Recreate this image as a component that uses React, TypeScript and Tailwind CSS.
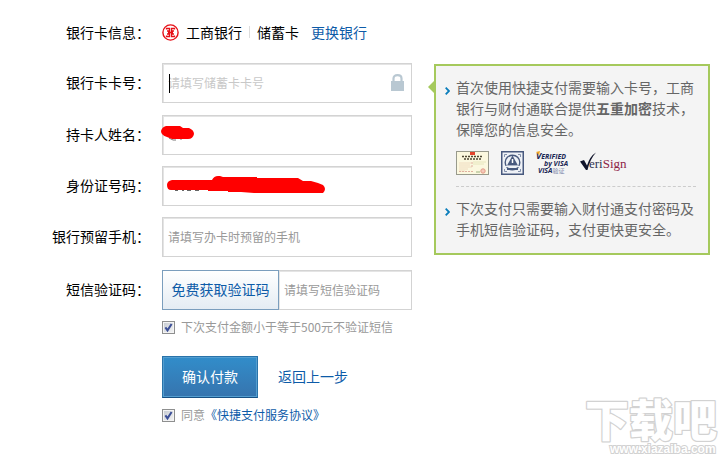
import { useState } from "react";
import type { InputHTMLAttributes, ReactNode } from "react";
import clsx from "clsx";

const inputClass =
  "block h-10 w-full border border-[#d3d3d3] bg-white px-[5px] pb-[2px] text-xs text-[#333] shadow-[inset_1px_1px_0_#e4e4e4] outline-none";

function Field({ id, label, children }: { id: string; label: string; children: ReactNode }) {
  return (
    <div className="flex items-center gap-3">
      <label htmlFor={id} className="w-[150px] shrink-0 pb-[2px] text-right text-black">
        {label}：
      </label>
      <div className="relative min-w-0 flex-1">{children}</div>
    </div>
  );
}

function TickBox({ className, ...props }: InputHTMLAttributes<HTMLInputElement>) {
  return (
    <span className={clsx("relative block size-[13px] shrink-0", className)}>
      <input
        type="checkbox"
        className="peer block size-[13px] appearance-none border border-[#8e8f8f] bg-linear-to-br from-[#c4c9d0] to-[#f6f6f6] shadow-[inset_0_0_0_1px_#f4f4f4]"
        {...props}
      />
      <svg viewBox="0 0 13 13" className="pointer-events-none absolute inset-0 hidden peer-checked:block">
        <path d="M3.4 6.4 5.5 9.4 9.6 3" fill="none" stroke="#3c4f97" strokeWidth="2" />
      </svg>
    </span>
  );
}

function BankLogo() {
  return (
    <svg viewBox="0 0 17 17" className="size-[17px] shrink-0" fill="none" stroke="#e60f16">
      <circle cx="8.5" cy="8.5" r="7.6" strokeWidth="1.4" />
      <path d="M4.5 5.5V4.5H7.5V7H5M12.5 5.5V4.5H9.5V7H12M4.5 11.5V12.5H7.5V10H5M12.5 11.5V12.5H9.5V10H12M6 8.5H11" strokeWidth="1.3" />
    </svg>
  );
}

function LockIcon() {
  return (
    <svg viewBox="0 0 13 17" className="pointer-events-none absolute top-[11px] right-2 h-[17px] w-[13px]">
      <path d="M2.5 8V4.5Q2.5 1.2 6.5 1.2T10.5 4.5V8" fill="none" stroke="#b9c8d2" strokeWidth="2.2" />
      <rect y="7" width="13" height="10" fill="#b9c8d2" />
    </svg>
  );
}

function LicenseBadge() {
  return (
    <svg viewBox="0 0 33 24" className="h-6 w-[33px]">
      <rect x=".5" y=".5" width="32" height="23" fill="#fbf8df" stroke="#989a8c" />
      <path d="M14 1h5v3h-5z" fill="#e2432c" />
      <path d="M6 5.5H27M8 8H25" stroke="#4c4633" strokeWidth="1.5" strokeDasharray="2 1" />
      <path d="M3 12H15M3 14H14M3 16H16M3 18H12M3 20H9" stroke="#f0dcc0" />
      <path d="M17 11H30M17 13H28" stroke="#e6e6bc" />
      <path d="M16 11V16M3 20.5H18" stroke="#e0b0a0" strokeDasharray="2 1" />
      <circle cx="27" cy="20" r="2.2" fill="#f5c8ba" stroke="#e39d88" />
      <path d="M20 21H24" stroke="#9db381" />
    </svg>
  );
}

function PoliceBadge() {
  return (
    <svg viewBox="0 0 23 24" className="h-6 w-[23px]">
      <rect x=".75" y=".75" width="21.5" height="22.5" fill="#eef1f6" stroke="#48597e" strokeWidth="1.5" />
      <path d="M3.5 6V3.5H6M17 3.5H19.5V6M19.5 18V20.5H17M6 20.5H3.5V18" fill="none" stroke="#8390ab" />
      <circle cx="11.5" cy="11.5" r="7.3" fill="#eef1f6" stroke="#48597e" strokeWidth="1.4" />
      <path d="M11.5 4.5 14.5 10 17 14.5H6L8.5 10Z" fill="#48597e" />
      <path d="M11.5 8V12" stroke="#fff" strokeWidth="1.5" />
      <path d="M4 15.5H19" stroke="#eef1f6" strokeWidth="1.4" />
      <path d="M6 18H17" stroke="#48597e" strokeWidth="2" />
    </svg>
  );
}

function VisaBadge() {
  return (
    <svg viewBox="0 0 32 24" className="h-6 w-8 overflow-visible font-['Open_Sans',sans-serif] font-bold italic" fill="#1b2754">
      <text x="0" y="8" fontSize="7">
        <tspan fontSize="9">V</tspan>ERIFIED
      </text>
      <path d="M0 1 4 0 3 4Z" fill="#f1a51f" />
      <text x="8" y="15" fontSize="7">by VISA</text>
      <text x="2" y="22" fontSize="7">
        VISA
        <tspan fontSize="6" fontWeight="400" fontStyle="normal" fontFamily="Noto Sans CJK SC, sans-serif" fill="#7e89aa">验证</tspan>
      </text>
    </svg>
  );
}

function VeriSignBadge() {
  return (
    <svg viewBox="0 0 48 24" className="h-6 w-12 overflow-visible font-['Liberation_Serif',serif]" fontSize="13">
      <path d="M0 10.5 4 9 7 14.5Q10 5 16 1.5 10 8 7.5 19H6Z" fill="#10142b" />
      <text x="9" y="17" fill="#303452">
        eri<tspan fill="#8d2346">Sign</tspan>
      </text>
    </svg>
  );
}

function Chevron() {
  return (
    <svg viewBox="0 0 5 8" className="mt-[10px] h-2 w-[5px] shrink-0" fill="none" stroke="#0a7dbb" strokeWidth="1.8">
      <path d="M.7.7 4 4 .7 7.3" />
    </svg>
  );
}

function Tips() {
  return (
    <aside className="relative mt-16 max-w-[276px] min-w-0 flex-1 self-start border-2 border-[#a5c95c] bg-[#f4f4f4] pt-[11px] pr-3 pb-[13px] pl-[9px] leading-[21px] text-[#666]">
      <svg viewBox="0 0 6 12" className="absolute top-[15px] -left-2 h-3 w-[6px]" fill="#a5c95c">
        <path d="M6 0V12L0 6Z" />
      </svg>
      <div className="flex gap-[6px]">
        <Chevron />
        <div className="min-w-0 flex-1 border-b border-dashed border-[#ccc] pb-[11px]">
          <p>
            首次使用快捷支付需要输入卡号，工商银行与财付通联合提供<b className="font-bold">五重加密</b>技术，保障您的信息安全。
          </p>
          <div className="mt-[11px] flex gap-3">
            <LicenseBadge />
            <PoliceBadge />
            <VisaBadge />
            <VeriSignBadge />
          </div>
        </div>
      </div>
      <div className="mt-[11px] flex gap-[6px]">
        <Chevron />
        <p className="min-w-0 flex-1">下次支付只需要输入财付通支付密码及手机短信验证码，支付更快更安全。</p>
      </div>
    </aside>
  );
}

function Watermark() {
  return (
    <svg
      viewBox="0 0 140 64"
      className="pointer-events-none absolute right-0 bottom-0 h-16 w-[140px] overflow-visible font-['Noto_Sans_CJK_SC',sans-serif] font-black"
      fill="#fff"
      stroke="#d2d2d2"
      paintOrder="stroke"
    >
      <text x="0" y="41" fontSize="44" strokeWidth="2.5" strokeLinejoin="round">下载吧</text>
      <text x="25" y="57" fontSize="12" strokeWidth="2" className="font-['Liberation_Sans',sans-serif] font-bold">www.xiazaiba.com</text>
    </svg>
  );
}

export default function App() {
  const [skipSms, setSkipSms] = useState(true);
  const [agreed, setAgreed] = useState(true);

  return (
    <main className="relative flex min-h-screen items-start gap-[22px] bg-white pr-[15px] font-['Noto_Sans_CJK_SC',sans-serif] text-sm">
      <form className="w-[412px] shrink-0 pt-[22px]" onSubmit={(e) => e.preventDefault()}>
        <div className="flex h-5 items-center gap-3">
          <span className="w-[150px] text-right">银行卡信息：</span>
          <div className="flex items-center">
            <BankLogo />
            <span className="ml-[7px]">工商银行</span>
            <span className="mx-[7px] h-3 w-px bg-[#ddd]" />
            <span>储蓄卡</span>
            <a href="#" className="ml-3 text-[#0d5ba8]">更换银行</a>
          </div>
        </div>

        <div className="mt-[21px]">
          <Field id="card" label="银行卡卡号">
            <input id="card" placeholder="请填写储蓄卡卡号" className={clsx(inputClass, "placeholder:text-[#c8c8c8]")} />
            <span className="absolute top-[11px] left-[7px] h-[19px] w-px bg-black" />
            <LockIcon />
          </Field>
        </div>

        <div className="mt-3 flex flex-col gap-[11px]">
          <Field id="holder" label="持卡人姓名">
            <input id="holder" className={inputClass} />
            <svg viewBox="0 0 36 17" className="pointer-events-none absolute top-[10px] -left-[2px] h-[17px] w-9">
              <path d="M9 13 13 15H16M20 14H22" fill="none" stroke="#777" />
              <path d="M6 1H20L23 3H29Q34 5 34 9 33 14 28 14H12L7 12Q1 10 1 6 2 2 6 1Z" fill="#f00" />
            </svg>
          </Field>
          <Field id="identity" label="身份证号码">
            <input id="identity" className={inputClass} />
            <svg viewBox="0 0 160 19" className="pointer-events-none absolute top-[10px] left-1 h-[19px] w-40">
              <path d="M9 14.5H12M16 14.5H18M21 14.5H25M29 14.5H33" stroke="#666" />
              <path
                d="M6 4H46Q48 0 52 0H54L57 1H91V2H132L137 5H145L152 7 157 9Q161 13 157 17H88L75 16H62V15H42V14H5Q1 14 1 9 1 5 6 4Z"
                fill="#f00"
              />
            </svg>
          </Field>
          <Field id="phone" label="银行预留手机">
            <input id="phone" placeholder="请填写办卡时预留的手机" className={clsx(inputClass, "placeholder:text-[#999]")} />
          </Field>
        </div>

        <div className="mt-[13px]">
          <Field id="sms" label="短信验证码">
            <div className="flex">
              <button
                type="button"
                className="h-10 w-[117px] shrink-0 border border-[#7b9ebd] bg-linear-to-b from-white to-[#e5ecf3] pb-[2px] text-[#0d5ba8]"
              >
                免费获取验证码
              </button>
              <input id="sms" placeholder="请填写短信验证码" className={clsx(inputClass, "min-w-0 flex-1 border-l-0 placeholder:text-[#999]")} />
            </div>
          </Field>
        </div>

        <div className="ml-[162px]">
          <label className="mt-2 flex h-[18px] items-center gap-[6px] text-xs whitespace-nowrap text-[#999]">
            <TickBox checked={skipSms} onChange={(e) => setSkipSms(e.target.checked)} />
            下次支付金额小于等于500元不验证短信
          </label>
          <div className="mt-5 flex items-center gap-5">
            <button
              type="submit"
              className="h-[42px] w-24 border border-[#2a73a9] border-b-[#174f82] bg-linear-to-b from-[#318dca] to-[#3674ae] pb-[2px] text-white shadow-[inset_0_0_0_1px_#549ed0]"
            >
              确认付款
            </button>
            <a href="#" className="pb-[2px] text-[#0d5ba8]">返回上一步</a>
          </div>
          <div className="mt-2 flex h-[18px] items-center text-xs text-[#999]">
            <label className="flex items-center gap-[6px]">
              <TickBox checked={agreed} onChange={(e) => setAgreed(e.target.checked)} />
              同意
            </label>
            <a href="#" className="text-[#0d5ba8]">《快捷支付服务协议》</a>
          </div>
        </div>
      </form>
      <Tips />
      <Watermark />
    </main>
  );
}
